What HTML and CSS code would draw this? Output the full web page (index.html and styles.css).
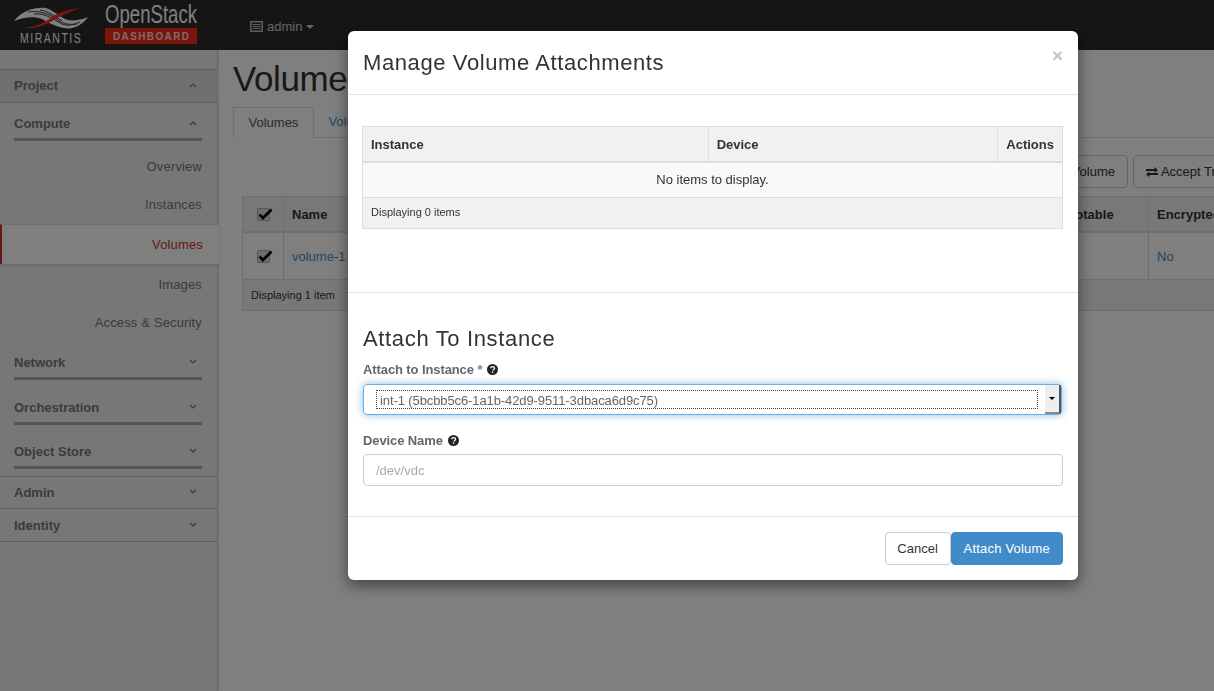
FILE: index.html
```html
<!DOCTYPE html>
<html lang="en">
<head>
  <meta charset="UTF-8">
  <title>Volumes - OpenStack Dashboard</title>
  <link rel="stylesheet" href="styles.css">
</head>
<body>
<div class="navbar">
  <svg class="logo" width="200" height="50" viewBox="0 0 200 50">
    <path d="M14 21 C22 11 34 7 46 8 C54 10 60 18 68 20 C74 21 81 20 88 17 C82 25 74 30 64 28 C54 26 48 22 42 19 C34 16 24 17 14 21Z" fill="#fff"/>
    <g fill="none" stroke="#2b2b2b" stroke-width=".9">
      <path d="M28 12 C38 10 50 14 58 20 C63 24 69 25 77 24"/>
      <path d="M34 14 C44 13 52 18 60 23 C65 26 71 26 80 22"/>
      <path d="M40 10 C48 11 56 17 62 21"/>
    </g>
    <path d="M23 28 C36 27 44 23 52 17 C60 12 70 9 80 8 C70 12 62 15 54 20 C44 26 34 29 23 28Z" fill="#f03226"/>
    <text class="logo-mirantis" transform="translate(20 43) scale(.75 1)" textLength="81" lengthAdjust="spacing">MIRANTIS</text>
    <text x="105" y="23" class="logo-openstack" textLength="92" lengthAdjust="spacingAndGlyphs">OpenStack</text>
    <rect x="105" y="28" width="92" height="16" fill="#f4281a"/>
    <text x="113" y="40" class="logo-dash" textLength="76" lengthAdjust="spacing">DASHBOARD</text>
  </svg>
  <div class="user-menu">
    <svg width="13" height="11" viewBox="0 0 13 11"><path d="M0 0h13v11H0z M1.500 1.500v8h10v-8z M2.500 3h8v1h-8z M2.500 5h8v1h-8z M2.500 7h8v1h-8z" fill="#bbb" fill-rule="evenodd"/></svg>
    <span>admin</span>
    <i class="caret"></i>
  </div>
</div>

<div class="page">
  <div class="sidebar">
    <div class="side-head side-head-open">Project <svg class="chev" width="8" height="5" viewBox="0 0 8 5"><path d="M1 4l3-3 3 3"/></svg></div>
    <div class="side-group side-group-first">Compute <svg class="chev" width="8" height="5" viewBox="0 0 8 5"><path d="M1 4l3-3 3 3"/></svg></div>
    <div class="side-links">
      <a class="side-link">Overview</a>
      <a class="side-link">Instances</a>
      <a class="side-link side-link-active">Volumes</a>
      <a class="side-link">Images</a>
      <a class="side-link">Access &amp; Security</a>
    </div>
    <div class="side-group side-group-network">Network <svg class="chev" width="8" height="5" viewBox="0 0 8 5"><path d="M1 1l3 3 3-3"/></svg></div>
    <div class="side-group side-group-orch">Orchestration <svg class="chev" width="8" height="5" viewBox="0 0 8 5"><path d="M1 1l3 3 3-3"/></svg></div>
    <div class="side-group side-group-last">Object Store <svg class="chev" width="8" height="5" viewBox="0 0 8 5"><path d="M1 1l3 3 3-3"/></svg></div>
    <div class="side-head side-head-top">Admin <svg class="chev" width="8" height="5" viewBox="0 0 8 5"><path d="M1 1l3 3 3-3"/></svg></div>
    <div class="side-head side-head-last">Identity <svg class="chev" width="8" height="5" viewBox="0 0 8 5"><path d="M1 1l3 3 3-3"/></svg></div>
  </div>

  <div class="content">
    <h1 class="page-title">Volumes</h1>
    <div class="tabs">
      <a class="tab tab-active">Volumes</a>
      <a class="tab">Volume Snapshots</a>
    </div>
    <div class="actions">
      <a class="btn">Create Volume</a>
      <a class="btn">
        <svg width="12" height="10" viewBox="0 0 12 10"><path d="M0 2h8.500V0L12 3 8.500 6V4H0z M12 6H3.500V4.500L0 7.500 3.500 10V8H12z" fill="#333"/></svg>
        Accept Transfer
      </a>
    </div>
    <div class="vol-table">
      <div class="vol-row vol-row-head">
        <div class="vol-cell vol-check"><span class="checkbox"><svg width="15" height="12" viewBox="0 0 15 12"><path d="M1.500 6.500l3.500 3.500L13.500 1.500" fill="none" stroke="#000" stroke-width="2.800"/></svg></span></div>
        <div class="vol-cell vol-name">Name</div>
        <div class="vol-cell vol-boot">Bootable</div>
        <div class="vol-cell vol-enc">Encrypted</div>
      </div>
      <div class="vol-row vol-row-body">
        <div class="vol-cell vol-check"><span class="checkbox"><svg width="15" height="12" viewBox="0 0 15 12"><path d="M1.500 6.500l3.500 3.500L13.500 1.500" fill="none" stroke="#000" stroke-width="2.800"/></svg></span></div>
        <div class="vol-cell vol-name"><a class="link">volume-1</a></div>
        <div class="vol-cell vol-boot"></div>
        <div class="vol-cell vol-enc"><a class="link">No</a></div>
      </div>
      <div class="vol-foot">Displaying 1 item</div>
    </div>
  </div>
</div>

<div class="backdrop"></div>

<div class="modal">
  <div class="modal-header">
    <h3 class="modal-title">Manage Volume Attachments</h3>
    <span class="close">&times;</span>
  </div>
  <div class="modal-table-wrap">
    <div class="att-table">
      <div class="att-head">
        <div class="att-th att-instance">Instance</div>
        <div class="att-th att-device">Device</div>
        <div class="att-th att-actions">Actions</div>
      </div>
      <div class="att-empty">No items to display.</div>
      <div class="att-foot">Displaying 0 items</div>
    </div>
  </div>
  <div class="modal-form">
    <h3 class="form-title">Attach To Instance</h3>
    <label class="form-label">Attach to Instance <span class="req">*</span>
      <svg class="help" width="11" height="11" viewBox="0 0 12 12"><circle cx="6" cy="6" r="6" fill="#222"/><path d="M3.900 4.700C4 3.400 5 2.800 6.100 2.800c1.200 0 2.100.7 2.100 1.700 0 1.500-1.700 1.400-1.700 2.600" fill="none" stroke="#fff" stroke-width="1.400"/><rect x="5.300" y="8" width="1.500" height="1.500" fill="#fff"/></svg>
    </label>
    <div class="select-box">
      <div class="select-focus">int-1 (5bcbb5c6-1a1b-42d9-9511-3dbaca6d9c75)</div>
      <div class="select-arrow"><i></i></div>
    </div>
    <label class="form-label form-label-second">Device Name
      <svg class="help" width="11" height="11" viewBox="0 0 12 12"><circle cx="6" cy="6" r="6" fill="#222"/><path d="M3.900 4.700C4 3.400 5 2.800 6.100 2.800c1.200 0 2.100.7 2.100 1.700 0 1.500-1.700 1.400-1.700 2.600" fill="none" stroke="#fff" stroke-width="1.400"/><rect x="5.300" y="8" width="1.500" height="1.500" fill="#fff"/></svg>
    </label>
    <input class="text-input" type="text" placeholder="/dev/vdc">
  </div>
  <div class="modal-footer">
    <a class="modal-btn modal-btn-cancel">Cancel</a>
    <a class="modal-btn modal-btn-primary">Attach Volume</a>
  </div>
</div>
</body>
</html>
```

FILE: styles.css
```css
* {
  box-sizing: border-box;
}

html, body {
  height: 100%;
}

body {
  margin: 0;
  overflow: hidden;
  background: #fff;
  color: #333;
  font-family: "Liberation Sans", Arial, sans-serif;
  font-size: 13px;
  line-height: 18px;
}

/* top bar */
.navbar {
  display: flex;
  align-items: center;
  height: 50px;
  background: #2b2b2b;
}

.logo {
  flex: none;
}

.logo-mirantis {
  font-size: 14px;
  fill: #fff;
}

.logo-openstack {
  font-size: 26px;
  fill: #fff;
}

.logo-dash {
  font-size: 10px;
  font-weight: bold;
  fill: #ffd6d0;
}

.user-menu {
  display: flex;
  align-items: center;
  gap: 4px;
  margin-left: 50px;
  color: #ccc;
  margin-top: 3px;
}

.caret {
  width: 0;
  height: 0;
  border-left: 4px solid transparent;
  border-right: 4px solid transparent;
  border-top: 4px solid #ccc;
}

/* page under the dialog */
.page {
  display: flex;
  height: 641px;
}

.sidebar {
  flex: none;
  width: 218px;
  padding-top: 19px;
  background: #eee;
  border-right: 1px solid #ccc;
  box-shadow: 1px 0 2px rgba(0, 0, 0, .1);
}

.side-head {
  display: flex;
  justify-content: space-between;
  align-items: center;
  height: 33px;
  padding: 0 20px 0 14px;
  border-bottom: 1px solid #bbb;
  font-weight: bold;
  color: #777;
}

.side-head-open {
  height: 34px;
  background: #dfe0e2;
  border-top: 1px solid #bbb;
}

.side-head-top {
  border-top: 1px solid #bbb;
}

.side-head-last {
  padding-top: 1px;
}

.chev {
  fill: none;
  stroke: #777;
  stroke-width: 1.200;
  margin-bottom: 2px;
}

.side-group {
  display: flex;
  justify-content: space-between;
  align-items: center;
  height: 44px;
  margin: 0 15px 0 14px;
  padding: 12px 5px 0 0;
  border-bottom: 3px solid #aaa;
  font-weight: bold;
  color: #777;
}

.side-group-first {
  height: 38px;
  padding-top: 7px;
}

.side-group-network {
  height: 38px;
  padding-top: 6px;
}

.side-group-orch {
  height: 45px;
  padding-top: 13px;
}

.side-group-last {
  margin-bottom: 7px;
}

.side-links {
  padding-top: 7px;
}

.side-link {
  display: flex;
  align-items: center;
  justify-content: flex-end;
  height: 38px;
  padding-right: 15px;
  color: #777;
  letter-spacing: .15px;
}

.side-link-active {
  height: 40px;
  width: 219px;
  position: relative;
  margin-bottom: 2px;
  background: #fff;
  border-left: 2px solid #c9352b;
  border-top: 1px solid #ddd;
  color: #c9352b;
  box-shadow: 0 2px 3px rgba(0, 0, 0, .1);
  padding-right: 16px;
}

.content {
  flex: 1;
  min-width: 0;
  padding: 0 0 0 15px;
  overflow: hidden;
}

.page-title {
  margin: 9px 0 9px;
  font-size: 35px;
  font-weight: 500;
  line-height: 39px;
  letter-spacing: -.4px;
  color: #333;
}

.tabs {
  display: flex;
  height: 31px;
  border-bottom: 1px solid #ddd;
}

.tab {
  padding: 6px 14.500px;
  height: 31px;
  white-space: nowrap;
  color: #428bca;
}

.tab-active {
  background: #fff;
  border: 1px solid #ddd;
  border-bottom-color: #fff;
  color: #555;
}

.actions {
  display: flex;
  justify-content: flex-end;
  gap: 5px;
  height: 33px;
  margin-top: 17px;
  margin-right: -51px;
}

.btn {
  display: flex;
  align-items: center;
  gap: 3px;
  height: 33px;
  padding: 0 12px;
  white-space: nowrap;
  background: #fff;
  border: 1px solid #ccc;
  border-radius: 4px;
}

.vol-table {
  width: 1000px;
  margin: 8px 0 0 9px;
  border: 1px solid #ddd;
}

.vol-row {
  display: flex;
}

.vol-row-head {
  height: 36px;
  background: #f1f1f1;
  border-bottom: 2px solid #ddd;
  font-weight: bold;
}

.vol-row-body {
  height: 47px;
  border-bottom: 1px solid #ddd;
}

.vol-cell {
  display: flex;
  align-items: center;
  padding: 1px 8px 0;
  border-right: 1px solid #ddd;
}

.vol-check {
  justify-content: center;
  width: 41px;
  padding-left: 9px;
}

.vol-name {
  width: 766px;
  border-right: 0;
}

.vol-boot {
  width: 99px;
}

.vol-enc {
  flex: 1;
  border-right: 0;
}

.checkbox {
  position: relative;
  width: 13px;
  height: 13px;
  background: #ddd;
  border: 1px solid #aaa;
  border-radius: 2px;
}

.checkbox svg {
  position: absolute;
  left: 0;
  top: -1px;
}

.link {
  color: #428bca;
}

.vol-foot {
  height: 30px;
  padding: 6px 8px;
  background: #f1f1f1;
  font-size: 11px;
}

/* dialog */
.backdrop {
  position: fixed;
  inset: 0;
  background: rgba(0, 0, 0, .5);
}

.modal {
  position: fixed;
  left: 348px;
  top: 31px;
  width: 730px;
  height: 549px;
  display: flex;
  flex-direction: column;
  background: #fff;
  border-radius: 6px;
  box-shadow: 0 5px 15px rgba(0, 0, 0, .5);
}

.modal-header {
  display: flex;
  justify-content: space-between;
  height: 64px;
  padding: 15px 15px 0;
  border-bottom: 1px solid #e5e5e5;
}

.modal-title {
  margin: 0;
  padding-top: 1px;
  font-size: 22px;
  font-weight: 500;
  line-height: 31px;
  letter-spacing: .6px;
}

.close {
  font-size: 19px;
  font-weight: bold;
  line-height: 20px;
  color: #c4c4c4;
}

.modal-table-wrap {
  height: 198px;
  padding: 31px 15px 0 14px;
  border-bottom: 1px solid #e5e5e5;
}

.att-table {
  height: 103px;
  border: 1px solid #ddd;
}

.att-head {
  display: flex;
  height: 36px;
  background: #f1f1f1;
  border-bottom: 2px solid #ddd;
  font-weight: bold;
}

.att-th {
  display: flex;
  align-items: center;
  padding: 1px 8px 0;
  border-right: 1px solid #ddd;
}

.att-instance {
  width: 346px;
}

.att-device {
  width: 290px;
}

.att-actions {
  flex: 1;
  border-right: 0;
}

.att-empty {
  height: 35px;
  line-height: 34px;
  text-align: center;
  background: #f9f9f9;
  border-bottom: 1px solid #ddd;
}

.att-foot {
  height: 30px;
  padding: 5px 8px;
  background: #f1f1f1;
  font-size: 11px;
}

.modal-form {
  height: 224px;
  padding: 30px 15px 0;
  border-bottom: 1px solid #e5e5e5;
}

.form-title {
  margin: 0;
  font-size: 22px;
  font-weight: 500;
  line-height: 32px;
  letter-spacing: .65px;
}

.form-label {
  display: block;
  margin-top: 6px;
  height: 18px;
  font-weight: bold;
  color: #666;
  letter-spacing: -.1px;
}

.form-label-second {
  margin-top: 17px;
}

.req {
  color: #428bca;
}

.help {
  margin-left: 1.500px;
  vertical-align: -1px;
}

.select-box {
  display: flex;
  align-items: center;
  justify-content: space-between;
  width: 699px;
  height: 31px;
  margin-top: 5px;
  padding-left: 12px;
  border: 1px solid #66afe9;
  border-radius: 4px;
  box-shadow: 0 0 8px rgba(102, 175, 233, .8);
  color: #666;
}

.select-focus {
  width: 662px;
  height: 19px;
  padding-left: 3px;
  line-height: 19px;
  letter-spacing: -.1px;
  border: 1px dotted #444;
}

.select-arrow {
  display: flex;
  align-items: center;
  justify-content: center;
  width: 16px;
  height: 29px;
  background: #eee;
  border-bottom: 2px solid #888;
  border-right: 2px solid #555;
}

.select-arrow i {
  width: 0;
  height: 0;
  border-left: 3px solid transparent;
  border-right: 3px solid transparent;
  border-top: 3px solid #000;
}

.text-input {
  display: block;
  width: 700px;
  height: 32px;
  margin-top: 4px;
  padding: 0 12px;
  border: 1px solid #ccc;
  border-radius: 4px;
  font: inherit;
  color: #555;
}

.text-input::placeholder {
  color: #aaa;
}

.modal-footer {
  display: flex;
  justify-content: flex-end;
  padding: 15px 15px 0;
}

.modal-btn {
  display: flex;
  align-items: center;
  height: 33px;
  padding: 0 12px;
  background: #fff;
  border: 1px solid #ccc;
  border-radius: 4px;
}

.modal-btn-cancel {
  justify-content: center;
  width: 66px;
  padding: 0;
}

.modal-btn-primary {
  background: #428bca;
  border-color: #428bca;
  color: #fff;
  letter-spacing: .2px;
}
```
